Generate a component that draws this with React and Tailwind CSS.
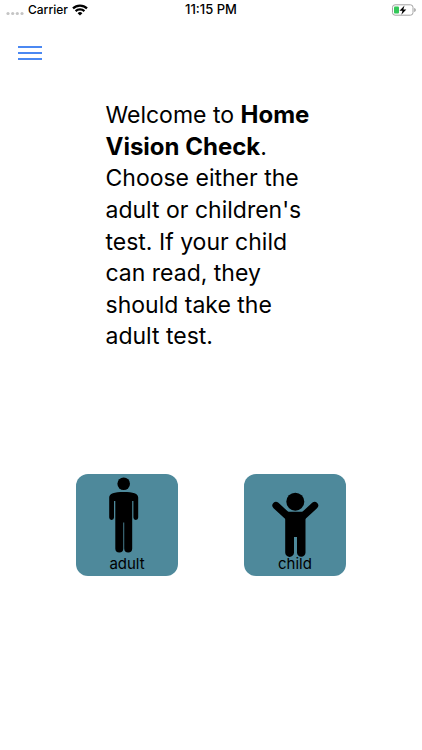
const choices = [
  { id: "adult", label: "adult", Figure: AdultFigure },
  { id: "child", label: "child", Figure: ChildFigure },
];

export default function App() {
  return (
    <div className="min-h-screen bg-white text-black font-['Inter','Liberation_Sans',sans-serif]">
      <StatusBar />

      <header className="px-[18px] pt-6">
        <button type="button" aria-label="Menu" className="block py-[2px]">
          <svg width="24" height="14" viewBox="0 0 24 14" stroke="#4b88f2" strokeWidth="2">
            <path d="M0 1h24M0 7h24M0 13h24" />
          </svg>
        </button>
      </header>

      <main className="pt-[38px]">
        <p className="mx-auto w-1/2 text-[23px] leading-snug">
          Welcome to <b className="text-[24px] leading-none font-bold">Home Vision Check</b>. Choose
          either the adult or children's test. If your child can read, they should take the adult
          test.
        </p>

        <div className="mt-[121px] flex justify-center gap-[66px]">
          {choices.map(({ id, label, Figure }) => (
            <button
              key={id}
              type="button"
              className="relative size-[102px] overflow-hidden rounded-xl bg-[#4e899b]"
            >
              <Figure />
              <span className="absolute inset-x-0 bottom-0 text-center text-[15px] leading-6">
                {label}
              </span>
            </button>
          ))}
        </div>
      </main>
    </div>
  );
}

function StatusBar() {
  return (
    <div className="grid h-5 grid-cols-3 items-center px-[6px] text-xs font-medium">
      <div className="flex items-center gap-1">
        <svg width="18" height="12" viewBox="0 0 18 12" fill="#c4c4c4">
          <circle cx="2" cy="9.5" r="1.6" />
          <circle cx="6.7" cy="9.5" r="1.6" />
          <circle cx="11.3" cy="9.5" r="1.6" />
          <circle cx="16" cy="9.5" r="1.6" />
        </svg>
        <span>Carrier</span>
        <svg width="16" height="12" viewBox="0 0 16 12" fill="none" stroke="#000" strokeWidth="2.2">
          <path d="M1 4.4a10 10 0 0 1 14 0" />
          <path d="M3.6 7.1a6.3 6.3 0 0 1 8.8 0" />
          <path d="M8 11.6 5.6 9.2a3.4 3.4 0 0 1 4.8 0z" fill="#000" stroke="none" />
        </svg>
      </div>
      <div className="text-center text-[13px]">11:15 PM</div>
      <div className="flex justify-end">
        <svg width="25" height="12" viewBox="0 0 25 12">
          <rect x="1.5" y="0.8" width="20.5" height="10.4" rx="2.6" fill="#fff" stroke="#a3a3a3" />
          <path d="M23.2 4v4c1-.3 1.6-1.1 1.6-2s-.6-1.7-1.6-2z" fill="#a3a3a3" />
          <rect x="3" y="2.5" width="5" height="7" rx="1" fill="#34c759" />
          <path d="M13.5 1.6 8.5 6.7h3l-1.2 4 5-5.3h-3z" fill="#000" />
        </svg>
      </div>
    </div>
  );
}

function AdultFigure() {
  return (
    <svg className="absolute inset-0" width="102" height="102" viewBox="0 0 102 102" aria-hidden="true">
      <circle cx="47.7" cy="9.8" r="6.3" />
      <path d="M33.2 23.5c0-4 5-5.6 14.5-5.6s14.500 1.600 14.500 5.600v20a2.400 2.400 0 0 1-4.800 0V27h-1.200v47.500a3.900 3.900 0 0 1-8 0V48.500h-.9v26a3.900 3.900 0 0 1-8 0V27H38v16.500a2.400 2.400 0 0 1-4.800 0z" />
    </svg>
  );
}

function ChildFigure() {
  return (
    <svg className="absolute inset-0" width="102" height="102" viewBox="0 0 102 102" aria-hidden="true">
      <circle cx="51.3" cy="27.7" r="9" />
      <path
        d="M32 31.5 44 42.500M70.600 31.500 58.600 42.500"
        stroke="#000"
        strokeWidth="7.2"
        strokeLinecap="round"
      />
      <path d="M43.500 37.800h15.800l2.200 4v36.700a4.200 4.200 0 0 1-8.500 0V63h-3v15.500a4.300 4.300 0 0 1-8.800 0V41.800z" />
    </svg>
  );
}
